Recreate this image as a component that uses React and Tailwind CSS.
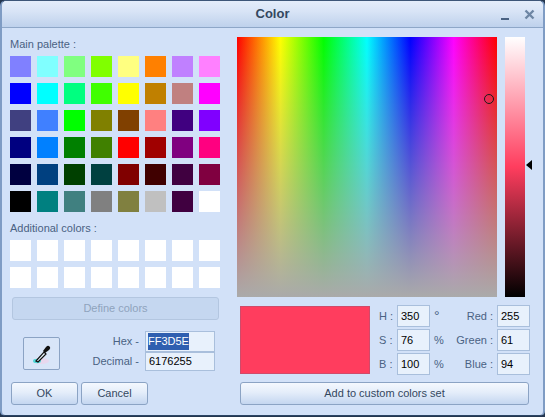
const mainPalette = [
  '#8080ff', '#80ffff', '#80ff80', '#80ff00', '#ffff80', '#ff8000', '#c080ff', '#ff80ff',
  '#0000ff', '#00ffff', '#00ff80', '#40ff00', '#ffff00', '#c08000', '#c08080', '#ff00ff',
  '#404080', '#4080ff', '#00ff00', '#808000', '#804000', '#ff8080', '#400080', '#8000ff',
  '#000080', '#0080ff', '#008000', '#408000', '#ff0000', '#a00000', '#800080', '#ff0080',
  '#000040', '#004080', '#004000', '#004040', '#800000', '#400000', '#400040', '#800040',
  '#000000', '#008080', '#408080', '#808080', '#808040', '#c0c0c0', '#400040', '#ffffff',
]

const additional = Array.from({ length: 16 }, () => '#ffffff')

function Swatches({ colors }) {
  return (
    <div className="grid grid-cols-[repeat(8,21px)] gap-[6px]">
      {colors.map((color, i) => (
        <div key={i} className="h-[21px] w-[21px]" style={{ backgroundColor: color }} />
      ))}
    </div>
  )
}

function Button({ className = '', disabled, children }) {
  return (
    <div
      className={`flex h-[23px] items-center justify-center rounded-[3px] border ${
        disabled
          ? 'border-[#b3c6e0] bg-[#c5d7f0] text-[#8fa3bd]'
          : 'border-[#8ba3c4] bg-[linear-gradient(to_bottom,#f4f8fe,#e4edfa_45%,#c4d6f0)] text-[#33475f]'
      } ${className}`}
    >
      {children}
    </div>
  )
}

function Field({ value, className = '' }) {
  return (
    <div className={`flex h-[22px] w-[33px] items-center border border-[#a9bfdc] bg-[#e8f1fc] pl-[3px] text-black ${className}`}>
      {value}
    </div>
  )
}

function ValueRow({ label, value, unit, unitClass = '' }) {
  return (
    <div className="flex h-[22px] items-center">
      <span className="w-[18px] text-[#4a6283]">{label}</span>
      <Field value={value} />
      <span className={`w-[24px] pl-[4px] text-[#4a6283] ${unitClass}`}>{unit}</span>
    </div>
  )
}

function RgbRow({ label, value }) {
  return (
    <div className="flex h-[22px] items-center justify-end whitespace-nowrap">
      <span className="pr-[4px] text-[#4a6283]">{label}</span>
      <Field value={value} />
    </div>
  )
}

export default function App() {
  return (
    <div className="h-[417px] w-[545px] overflow-hidden bg-[#24364f] font-['Liberation_Sans',sans-serif] text-[11px]">
      <div className="flex h-[416px] flex-col overflow-hidden rounded-t-[6px] rounded-b-[5px] border-x-2 border-t border-b border-x-[#7f9cc4] border-t-[#3d5678] border-b-[#2c4464] bg-[#d2e1f8]">
        <div className="relative flex h-[27px] shrink-0 items-center justify-center border-b border-[#8ea7c8] bg-[linear-gradient(to_bottom,#e4edfa,#d8e4f6_40%,#bed1ec)]">
          <span className="text-[13px] font-bold text-[#33475f]">Color</span>
          <div className="absolute right-[34px] top-[17px] h-[2px] w-[8px] bg-[#4a6283]" />
          <svg className="absolute right-[8px] top-[8px]" width="11" height="11" viewBox="0 0 11 11">
            <path d="M1.5 1.5 L9.5 9.5 M9.5 1.5 L1.5 9.5" stroke="#6e86a4" strokeWidth="2.4" />
          </svg>
        </div>

        <div className="flex min-h-0 flex-1">
          <div className="w-[235px] shrink-0 pl-[8px]">
            <div className="mt-[10px] h-[18px] leading-[13px] text-[#4a6283]">Main palette :</div>
            <Swatches colors={mainPalette} />
            <div className="mt-[6px] h-[20px] leading-[20px] text-[#4a6283]">Additional colors :</div>
            <div className="mt-[2px]">
              <Swatches colors={additional} />
            </div>
            <Button disabled className="ml-[2px] mt-[9px] w-[207px]">Define colors</Button>

            <div className="mt-[11px] flex h-[41px]">
              <div className="ml-[13px] mt-[6px] flex h-[33px] w-[37px] items-center justify-center rounded-[2px] border border-[#8ba3c4] bg-[#d8e5f8]">
                <svg width="22" height="22" viewBox="0 0 22 22">
                  <ellipse cx="10" cy="18" rx="8" ry="3" fill="#e8d8ee" />
                  <ellipse cx="6" cy="18" rx="4" ry="2.2" fill="#4fd8d8" />
                  <path d="M5 18 L13 9 L15 11 L7 19 Z" fill="#e6f2fa" stroke="#111" strokeWidth="1.2" />
                  <path d="M12 8 L15 4 Q17 2 18.5 3.5 Q20 5 18 7 L14 10 Z" fill="#111" />
                </svg>
              </div>
              <div className="flex w-[155px] flex-col">
                <div className="flex h-[21px] items-center justify-end">
                  <span className="pr-[6px] text-[#4a6283]">Hex -</span>
                  <div className="flex h-[21px] w-[70px] items-center border border-[#a9bfdc] bg-[#e8f1fc] pl-[2px]">
                    <span className="bg-[#2f5fb0] text-white">FF3D5E</span>
                  </div>
                </div>
                <div className="flex h-[19px] items-center justify-end">
                  <span className="pr-[6px] text-[#4a6283]">Decimal -</span>
                  <div className="flex h-[19px] w-[70px] items-center border border-[#a9bfdc] bg-[#e8f1fc] pl-[3px] text-black">6176255</div>
                </div>
              </div>
            </div>

            <div className="ml-[1px] mt-[10px] flex gap-[3px]">
              <Button className="w-[67px]">OK</Button>
              <Button className="w-[67px]">Cancel</Button>
            </div>
          </div>

          <div className="min-w-0 flex-1">
            <div className="mt-[9px] flex">
              <div className="relative h-[260px] w-[260px] bg-[linear-gradient(to_right,#ff0000,#ffff00_16.67%,#00ff00_33.33%,#00ffff_50%,#0000ff_66.67%,#ff00ff_83.33%,#ff0000)]">
                <div className="absolute inset-0 bg-[linear-gradient(to_bottom,rgba(170,170,170,0),#aaaaaa)]" />
                <div className="absolute left-[247px] top-[57px] h-[10px] w-[10px] rounded-full border border-[#1a1a1a]" />
              </div>
              <div className="relative ml-[8px] h-[260px] w-[20px] bg-[linear-gradient(to_bottom,#ffffff,#ff3d5e_50%,#000000)]">
                <div className="absolute left-[21px] top-[123px] h-0 w-0 border-y-[5px] border-r-[6px] border-y-transparent border-r-black" />
              </div>
            </div>

            <div className="mt-[8px] flex">
              <div className="ml-[3px] mt-[1px] h-[68px] w-[130px] border border-[#d04a6a] bg-[#ff3d5e]" />
              <div className="ml-[9px] flex flex-col gap-[2px]">
                <ValueRow label="H :" value="350" unit="°" unitClass="text-[14px]" />
                <ValueRow label="S :" value="76" unit="%" />
                <ValueRow label="B :" value="100" unit="%" />
              </div>
              <div className="flex w-[76px] flex-col gap-[2px]">
                <RgbRow label="Red :" value="255" />
                <RgbRow label="Green :" value="61" />
                <RgbRow label="Blue :" value="94" />
              </div>
            </div>

            <Button className="ml-[3px] mt-[7px] w-[289px]">Add to custom colors set</Button>
          </div>
        </div>
      </div>
    </div>
  )
}
